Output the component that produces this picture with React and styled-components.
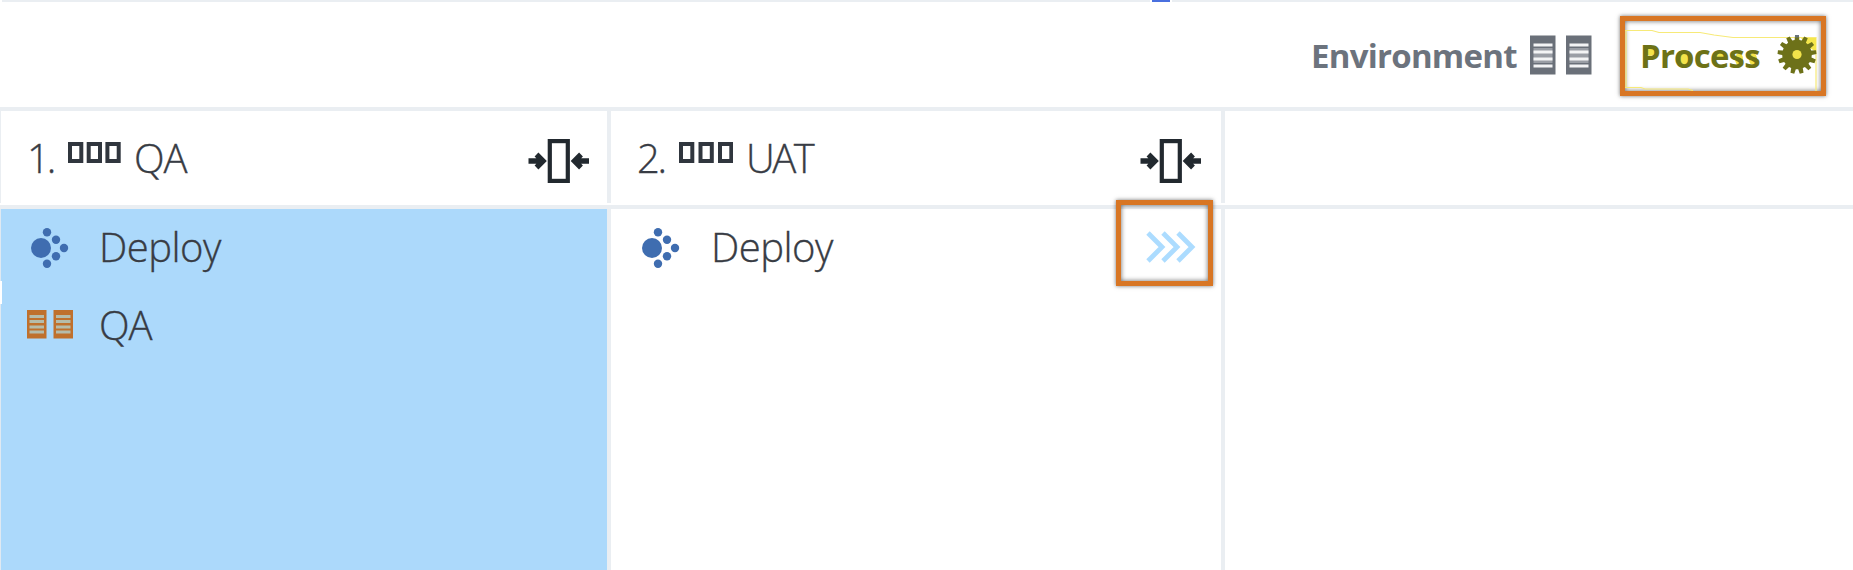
import React from "react";
import styled, { createGlobalStyle } from "styled-components";

const Global = createGlobalStyle`
  * { box-sizing: border-box; }
  body { margin: 0; background: #fff; overflow: hidden; }
`;
const Page = styled.main`
  width: 1853px; height: 570px; display: flex; flex-direction: column;
  overflow: hidden; font-family: "Open Sans", "Noto Sans", sans-serif; color: #383c44;
`;
const TopRule = styled.div`display: flex; height: 2px; flex: none; padding-left: 2px;`;
const Rule = styled.div`
  background: ${(p) => p.$color || "#eaeef2"};
  width: ${(p) => (p.$width ? p.$width + "px" : "auto")};
  flex: ${(p) => (p.$width ? "none" : 1)};
  margin-right: ${(p) => p.$gap || 0}px;
`;
const Toolbar = styled.header`
  height: 109px; flex: none; display: flex; align-items: flex-start; justify-content: flex-end;
  padding: 14px 27px 0 0; border-bottom: 4px solid #eaeef2;
`;
const Environment = styled.div`display: flex; align-items: flex-start; margin-right: 28px; height: 80px;`;
const ToolLabel = styled.span`
  font-size: 33px; line-height: 46px; font-weight: 700; white-space: nowrap;
  letter-spacing: ${(p) => p.$spacing}px; color: ${(p) => p.$color};
  width: ${(p) => p.$width}px; margin-top: 17px; position: relative;
`;
const ToolIcon = styled.svg`display: block; flex: none; margin-top: 19px;`;
const Process = styled.div`
  position: relative; width: 206px; height: 80px; border: 5px solid #d87624; display: flex; align-items: flex-start;
  padding-left: 15px; box-shadow: 0 0 4px rgba(0,0,0,.55), inset 0 0 5px rgba(0,0,0,.6);
  > span { margin-top: 12px; }
`;
const Highlight = styled.svg`position: absolute; left: 0; top: 0;`;
const Gear = styled.svg`position: relative; display: block; flex: none; margin-top: 13px;`;
const Board = styled.section`flex: 1; display: grid; grid-template-columns: 611px 614px 1fr;`;
const Column = styled.div`display: flex; flex-direction: column; min-width: 0;`;
const Head = styled.div`
  height: 98px; flex: none; border-bottom: 4px solid #eaeef2; padding-bottom: 2px; display: flex;
`;
const HeadInner = styled.div`
  flex: 1; display: flex; align-items: flex-start; padding: 19px ${(p) => (p.$first ? 18 : 20)}px 0 26px;
  border-right: ${(p) => (p.$last ? 0 : 4)}px solid #eaeef2;
  border-left: ${(p) => (p.$first ? 1 : 0)}px solid #eaeef2;
`;
const Body = styled.div`
  flex: 1; border-right: ${(p) => (p.$last ? 0 : 4)}px solid #eaeef2; background: ${(p) => (p.$active ? "#acd9fb" : "#fff")};
  border-left: ${(p) => (p.$active ? 1 : 0)}px solid #dfe9f2;
`;
const Label = styled.span`
  font-size: 40px; line-height: 56px; font-weight: 300; white-space: nowrap;
  letter-spacing: ${(p) => p.$spacing || 0}px; width: ${(p) => (p.$width ? p.$width + "px" : "auto")};
  margin-left: ${(p) => p.$shift || 0}px; -webkit-text-stroke: 0.35px currentColor;
`;
const StageIcon = styled.svg`display: block; flex: none; margin: 12px 11px 0 2px;`;
const Collapse = styled.svg`display: block; flex: none; margin: 9px 0 0 auto;`;
const Row = styled.div`
  height: 78px; display: flex; align-items: flex-start;
  padding: 10px 8px 0 ${(p) => p.$left || 25}px;
`;
const RowIcon = styled.svg`display: block; flex: none; margin: ${(p) => p.$top}px 28px 0 0;`;
const Callout = styled.div`
  width: 97px; height: 86px; border: 5px solid #d87624; margin: -19px 0 0 auto; position: relative;
  box-shadow: 0 0 4px rgba(0,0,0,.55), inset 0 0 5px rgba(0,0,0,.6);
  svg { display: block; margin: 26px 0 0 25px; }
`;
const EdgeMark = styled.i`position: absolute; left: 0; top: 281px; width: 2px; height: 23px; background: #fff;`;

function gearPath(cx, cy, inner, outer, teeth) {
  const pts = [];
  for (let i = 0; i < teeth; i++) {
    const a = (i / teeth) * Math.PI * 2 - Math.PI / 2;
    [[-0.16, inner], [-0.1, outer], [0.1, outer], [0.16, inner]].forEach(([d, r]) =>
      pts.push((cx + r * Math.cos(a + d)).toFixed(2) + " " + (cy + r * Math.sin(a + d)).toFixed(2)));
  }
  return "M" + pts.join("L") + "Z";
}

function Stages({ step = 18.7 }) {
  return (
    <StageIcon width="54" height="21" viewBox="0 0 54 21" fill="none" stroke="#30363e" strokeWidth="4">
      {[0, step, step * 2].map((x) => <rect key={x} x={x + 2} y="2" width="11.3" height="17" />)}
    </StageIcon>
  );
}
function CollapseIcon() {
  return (
    <Collapse width="61" height="44" viewBox="0 0 61 44" fill="none" stroke="#22292f">
      <rect x="21.8" y="2.1" width="18" height="39.8" strokeWidth="4.2" />
      <path d="M0.5 22H14M8.5 15.5L15 22L8.5 28.5M61 22H47.5M53 15.5L46.5 22L53 28.5" strokeWidth="5.4" />
    </Collapse>
  );
}
function DeployIcon() {
  return (
    <RowIcon $top={8} width="44" height="42" viewBox="0 0 44 42" fill="#3f6db0">
      <circle cx="15" cy="21" r="10" />
      <circle cx="21" cy="5.2" r="4.2" /><circle cx="30" cy="12.7" r="4.2" /><circle cx="38" cy="21" r="4.2" />
      <circle cx="30" cy="29.2" r="4.2" /><circle cx="21" cy="36.8" r="4.2" />
    </RowIcon>
  );
}

export default function App() {
  return (
    <Page>
      <Global />
      <TopRule>
        <Rule $width={1148} $gap={2} /><Rule $width={18} $gap={2} $color="#4a70df" /><Rule />
      </TopRule>
      <Toolbar>
        <Environment>
          <ToolLabel $color="#6c737d" $width={219} $spacing={-0.75}>Environment</ToolLabel>
          <ToolIcon width="62" height="40" viewBox="0 0 62 40">
            {[0, 36].map((x) => (
              <g key={x}>
                <rect x={x} y="0.5" width="25.5" height="39" fill="#6a7079" />
                <path d={`M${x + 3.5} 17H${x + 22.5}M${x + 3.5} 24H${x + 22.5}`} stroke="#9a9ea5" strokeWidth="8" />
                <path d={`M${x + 3.5} 10H${x + 22.5}M${x + 3.5} 17H${x + 22.5}M${x + 3.5} 24H${x + 22.5}M${x + 3.5} 31H${x + 22.5}`} stroke="#f3f4f5" strokeWidth="3.2" />
              </g>
            ))}
          </ToolIcon>
        </Environment>
        <Process>
          <Highlight width="196" height="70" viewBox="0 0 196 70">
            <path d="M0 9.5H27L34 11.5H75L89 14L108 16.5H191V70M1 9V66M0 66.5H16L20 68H63L68 69.5" fill="none" stroke="#f7ea78" strokeWidth="1.2" />
            <path d="M176 17H191V31L185 27Z" fill="#f5e74c" />
            <g fill="#f2e34a">
              <ellipse cx="25" cy="30" rx="5" ry="5" /><ellipse cx="59" cy="38" rx="7" ry="8" />
              <ellipse cx="94" cy="34" rx="6" ry="4" /><ellipse cx="114" cy="38" rx="4" ry="6" /><ellipse cx="128" cy="38" rx="4" ry="6" />
            </g>
          </Highlight>
          <ToolLabel $color="#6d7217" $width={137} $spacing={-0.8}>Process</ToolLabel>
          <Gear width="40" height="40" viewBox="0 0 40 40">
            <path d={gearPath(20, 20.5, 14.8, 19.5, 13)} fill="#6d7119" />
            <path d="M18 1H22V3.5H18Z" fill="#68737b" />
            <circle cx="20" cy="20.5" r="4.6" fill="#f2e34a" />
          </Gear>
        </Process>
      </Toolbar>
      <Board>
        <Column>
          <Head><HeadInner $first>
            <Label $width={39} $spacing={-3}>1.</Label><Stages /><Label $shift={1} $spacing={-1}>QA</Label><CollapseIcon />
          </HeadInner></Head>
          <Body $active>
            <Row><DeployIcon /><Label $shift={1} $spacing={-0.5}>Deploy</Label></Row>
            <Row>
              <RowIcon $top={13} width="47" height="29" viewBox="-1 0 47 29">
                {[0, 26.5].map((x) => (
                  <g key={x}>
                    <rect x={x} width="19.5" height="28.5" fill="#bf702d" />
                    <path d={`M${x + 2.5} 6.5H${x + 17}M${x + 2.5} 11.5H${x + 17}M${x + 2.5} 17H${x + 17}M${x + 2.5} 22H${x + 17}`} stroke="#b5bcab" strokeWidth="3" />
                  </g>
                ))}
              </RowIcon>
              <Label $shift={-2} $spacing={-1}>QA</Label>
            </Row>
          </Body>
        </Column>
        <Column>
          <Head><HeadInner>
            <Label $width={40} $spacing={-2.4}>2.</Label><Stages step={19.5} /><Label $shift={2} $spacing={-2.5}>UAT</Label><CollapseIcon />
          </HeadInner></Head>
          <Body>
            <Row $left={26}><DeployIcon /><Label $shift={2} $spacing={-0.5}>Deploy</Label>
              <Callout>
                <svg width="50" height="32" viewBox="0 0 50 32" fill="none" stroke="#acdcff" strokeWidth="4.8">
                  <path d="M2 2L16 16L2 30M17 2L31 16L17 30M32 2L46 16L32 30" />
                </svg>
              </Callout>
            </Row>
          </Body>
        </Column>
        <Column><Head><HeadInner $last /></Head><Body $last /></Column>
      </Board>
      <EdgeMark />
    </Page>
  );
}
